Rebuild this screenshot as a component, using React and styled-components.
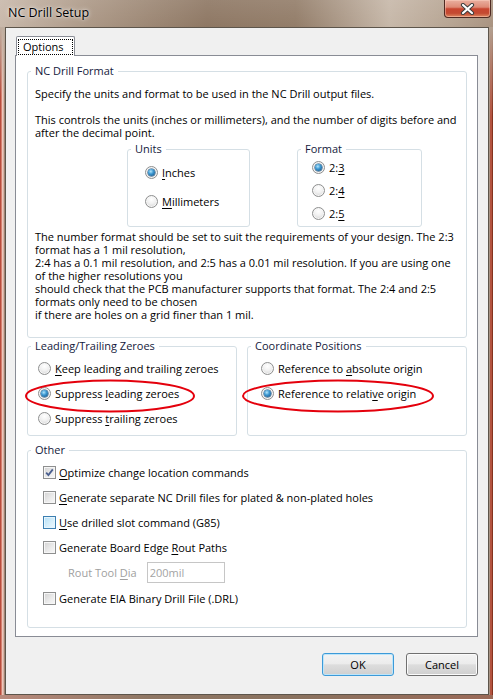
import React from 'react';
import styled, { createGlobalStyle, css } from 'styled-components';

const GlobalStyle = createGlobalStyle`
  html, body { margin: 0; padding: 0; background: #fff; }
  #root { width: 493px; height: 699px; }
  *, *::before, *::after { box-sizing: border-box; }
`;

const Window = styled.div`
  width: 493px;
  height: 699px;
  display: flex;
  flex-direction: column;
  overflow: hidden;
  font-family: "Open Sans", "Noto Sans", sans-serif;
  font-size: 11px;
  color: #000;
  background:
    linear-gradient(to bottom, rgba(255,255,255,0.10), rgba(255,255,255,0) 30px),
    linear-gradient(to right, #c8b8aa 0%, #ab9785 18%, #8d7662 42%, #927c68 60%, #c6b7a8 79%, #b6a492 91%, #a8927f 100%);
`;

const TitleBar = styled.div`
  height: 27px;
  flex: none;
  display: flex;
  align-items: flex-start;
  justify-content: space-between;
  padding: 0 2px 0 8px;
`;

const TitleText = styled.div`
  font-size: 12.5px;
  line-height: 26px;
  color: #000;
  text-shadow: 0 0 5px rgba(255,255,255,0.85), 0 0 2px rgba(255,255,255,0.6);
`;

const CloseButton = styled.div`
  width: 47px;
  height: 18px;
  border: 1px solid #4e2a22;
  border-top: none;
  border-radius: 0 0 4px 4px;
  background: linear-gradient(to bottom, #eab0a0 0%, #de8a76 42%, #c8452f 52%, #c44a32 78%, #de8a62 100%);
  box-shadow: inset 0 0 0 1px rgba(255, 215, 200, 0.45);
  display: flex;
  align-items: center;
  justify-content: center;
`;

const FrameRow = styled.div`
  flex: 1;
  display: flex;
  min-height: 0;
`;

const LeftFrame = styled.div`
  width: 5px;
  flex: none;
  background:
    linear-gradient(to bottom, #bfae9f 0px, rgba(191,174,159,0.6) 30px, rgba(191,174,159,0) 70px),
    linear-gradient(to right, #b84c3d 0 1px, #d6806f 1px 2px, #ecc6ba 2px 3px, #d7b1a3 3px 4px, #9c8474 4px 5px);
`;

const RightFrame = styled.div`
  width: 4px;
  flex: none;
  background:
    linear-gradient(to bottom, #b2a090 0px, rgba(178,160,144,0.5) 40px, rgba(178,160,144,0) 90px),
    linear-gradient(to right, #a89484 0 1px, #b4533f 1px 3px, #84321f 3px 4px);
`;

const BottomFrame = styled.div`
  height: 4px;
  flex: none;
  background: linear-gradient(to right, #b98a7c 0%, #8f7764 30%, #8a725f 60%, #9b6a58 100%);
`;

const Client = styled.div`
  flex: 1;
  min-width: 0;
  display: flex;
  flex-direction: column;
  background: #f0f0f0;
  border: 1px solid #5d554b;
  padding: 8px 10px 18px 9px;
`;

const TabStrip = styled.div`
  display: flex;
  padding-left: 1px;
`;

const Tab = styled.div`
  position: relative;
  z-index: 1;
  height: 20px;
  margin-bottom: -1px;
  padding: 2px 1px 0 1px;
  border: 1px solid #898c95;
  border-bottom: none;
  border-radius: 2px 2px 0 0;
  background: #fff;
`;

const TabFocus = styled.span`
  display: block;
  height: 16px;
  padding: 0 8px 0 4px;
  border: 1px dotted #000;
  line-height: 14px;
`;

const Panel = styled.div`
  display: flex;
  flex-direction: column;
  min-width: 0;
  background: #fff;
  border: 1px solid #898c95;
  padding: 7px 10px 8px 11px;
`;

const Group = styled.fieldset`
  margin: ${p => p.$mt || 0}px 0 0 0;
  padding: 0;
  min-width: 0;
  border: 1px solid #d5dfe5;
  border-radius: 3px;
  ${p => p.$w ? css`width: ${p.$w}px; flex: none;` : css`flex: 1;`}
`;

const Legend = styled.legend`
  margin-left: 3px;
  padding: 0 4px;
  font-size: 11px;
  line-height: 16px;
  color: #141a3c;
`;

const GroupBody = styled.div`
  display: flex;
  flex-direction: column;
  align-items: flex-start;
  gap: ${p => p.$gap || 0}px;
  padding: ${p => p.$pad};
`;

const Text = styled.div`
  margin-top: ${p => p.$mt || 0}px;
  line-height: 13px;
  white-space: nowrap;
`;

const SubRow = styled.div`
  display: flex;
  gap: 47px;
  margin-top: 2px;
  padding-left: 92px;
`;

const Row = styled.div`
  display: flex;
  gap: 10px;
`;

const OptionRow = styled.label`
  position: relative;
  display: flex;
  align-items: center;
  gap: ${p => p.$gap || 4}px;
  height: ${p => p.$h || 20}px;
  padding-left: ${p => p.$indent || 0}px;
  white-space: nowrap;
  color: ${p => p.$disabled ? '#a0a0a0' : '#000'};
`;

const RadioGlyph = styled.span`
  position: relative;
  flex: none;
  width: 13px;
  height: 13px;
  border-radius: 50%;
  border: 1px solid #8e8f8f;
  background: radial-gradient(circle at 50% 30%, #ffffff 0%, #f1f1f1 45%, #cdcdcd 100%);
  box-shadow: inset 0 0 0 1px #f6f6f6;
  ${p => p.$checked && css`
    &::after {
      content: '';
      position: absolute;
      left: 2px;
      top: 2px;
      width: 7px;
      height: 7px;
      border-radius: 50%;
      background: radial-gradient(circle at 40% 35%, #b3e6fc 0%, #3f9ad3 40%, #185b90 85%);
      box-shadow: 0 0 0 0.5px #1a4b75;
    }
  `}
`;

const CheckGlyph = styled.span`
  flex: none;
  display: flex;
  align-items: center;
  justify-content: center;
  width: 13px;
  height: 13px;
  border: 1px solid ${p => p.$hot ? '#3c7fb1' : '#8e8f8f'};
  background: ${p => p.$hot
    ? 'linear-gradient(135deg, #b4dff6 0%, #d9f0fb 60%, #ecf8fe 100%)'
    : 'linear-gradient(135deg, #d2d2d2 0%, #ececec 60%, #f8f8f8 100%)'};
  box-shadow: inset 0 0 0 1px ${p => p.$hot ? '#e6f5fd' : '#f6f6f6'};
`;

const Acc = styled.u`
  text-decoration: underline;
  text-underline-offset: 2px;
`;

const Ellipse = styled.svg`
  position: absolute;
  left: ${p => p.$x}px;
  top: ${p => p.$y}px;
  overflow: visible;
  pointer-events: none;
`;

const TextBox = styled.input`
  width: 78px;
  height: 21px;
  margin: 0;
  padding: 0 2px;
  border: 1px solid #c6c6c6;
  background: #fff;
  color: #a3a3a3;
  font-family: inherit;
  font-size: 11px;
  outline: none;
`;

const ButtonRow = styled.div`
  display: flex;
  justify-content: flex-end;
  gap: 12px;
  margin-top: 16px;
`;

const Button = styled.button`
  width: 72px;
  height: 23px;
  padding: 0;
  font-family: inherit;
  font-size: 11px;
  color: #000;
  border: 1px solid ${p => p.$default ? '#3c9ad8' : '#707070'};
  border-radius: 3px;
  background: linear-gradient(to bottom, #f3f3f3 0%, #ececec 45%, #dddddd 52%, #cfcfcf 100%);
  box-shadow: inset 0 0 0 1px ${p => p.$default ? '#bde5fa' : '#fbfbfb'};
`;

function Radio({ checked, children }) {
  return (
    <OptionRow>
      <RadioGlyph $checked={checked} />
      <span>{children}</span>
    </OptionRow>
  );
}

function Check({ checked, hot, children }) {
  return (
    <OptionRow $gap={3}>
      <CheckGlyph $hot={hot}>
        {checked && (
          <svg width="9" height="9" viewBox="0 0 9 9">
            <path d="M1.2 4.6 L3.4 7 L7.8 1.4" fill="none" stroke="#4a5f8f" strokeWidth="1.8" />
          </svg>
        )}
      </CheckGlyph>
      <span>{children}</span>
    </OptionRow>
  );
}

function RedEllipse({ x, y, w, h }) {
  return (
    <Ellipse $x={x} $y={y} width={w} height={h} viewBox={`0 0 ${w} ${h}`}>
      <ellipse cx={w / 2} cy={h / 2} rx={w / 2 - 2} ry={h / 2 - 2.5} fill="none" stroke="#e4000c" strokeWidth="2" />
    </Ellipse>
  );
}

export default function App() {
  return (
    <>
      <GlobalStyle />
      <Window>
        <TitleBar>
          <TitleText>NC Drill Setup</TitleText>
          <CloseButton aria-label="Close">
            <svg width="15" height="12" viewBox="0 0 15 12">
              <path d="M3 2 L12 10 M12 2 L3 10" stroke="#3d3d3d" strokeWidth="4.2" strokeLinecap="round" />
              <path d="M3 2 L12 10 M12 2 L3 10" stroke="#ffffff" strokeWidth="2.2" strokeLinecap="round" />
            </svg>
          </CloseButton>
        </TitleBar>
        <FrameRow>
          <LeftFrame />
          <Client>
            <TabStrip>
              <Tab><TabFocus>Options</TabFocus></Tab>
            </TabStrip>
            <Panel>
              <Group>
                <Legend>NC Drill Format</Legend>
                <GroupBody $pad="8px 8px 16px 7px">
                  <Text>
                    Specify the units and format to be used in the NC Drill output files.<br />
                    <br />
                    This controls the units (inches or millimeters), and the number of digits before and<br />
                    after the decimal point.
                  </Text>
                  <SubRow>
                    <Group $w={123}>
                      <Legend>Units</Legend>
                      <GroupBody $pad="5px 0 15px 17px" $gap={9}>
                        <Radio checked><Acc>I</Acc>nches</Radio>
                        <Radio><Acc>M</Acc>illimeters</Radio>
                      </GroupBody>
                    </Group>
                    <Group $w={125}>
                      <Legend>Format</Legend>
                      <GroupBody $pad="0 0 3px 14px" $gap={3}>
                        <Radio checked>2:<Acc>3</Acc></Radio>
                        <Radio>2:<Acc>4</Acc></Radio>
                        <Radio>2:<Acc>5</Acc></Radio>
                      </GroupBody>
                    </Group>
                  </SubRow>
                  <Text $mt={3}>
                    The number format should be set to suit the requirements of your design. The 2:3<br />
                    format has a 1 mil resolution,<br />
                    2:4 has a 0.1 mil resolution, and 2:5 has a 0.01 mil resolution. If you are using one<br />
                    of the higher resolutions you<br />
                    should check that the PCB manufacturer supports that format. The 2:4 and 2:5<br />
                    formats only need to be chosen<br />
                    if there are holes on a grid finer than 1 mil.
                  </Text>
                </GroupBody>
              </Group>

              <Row>
                <Group $w={210}>
                  <Legend>Leading/Trailing Zeroes</Legend>
                  <GroupBody $pad="4px 0 7px 10px" $gap={5}>
                    <Radio><Acc>K</Acc>eep leading and trailing zeroes</Radio>
                    <OptionRow>
                      <RadioGlyph $checked />
                      <span>Suppress <Acc>l</Acc>eading zeroes</span>
                      <RedEllipse x={-14} y={-5} w={172} h={36} />
                    </OptionRow>
                    <Radio>Suppress <Acc>t</Acc>railing zeroes</Radio>
                  </GroupBody>
                </Group>
                <Group>
                  <Legend>Coordinate Positions</Legend>
                  <GroupBody $pad="4px 0 7px 13px" $gap={5}>
                    <Radio>Reference to <Acc>a</Acc>bsolute origin</Radio>
                    <OptionRow>
                      <RadioGlyph $checked />
                      <span>Reference to relati<Acc>v</Acc>e origin</span>
                      <RedEllipse x={-20} y={-5} w={194} h={36} />
                    </OptionRow>
                  </GroupBody>
                </Group>
              </Row>

              <Group $mt={6}>
                <Legend>Other</Legend>
                <GroupBody $pad="4px 0 19px 15px" $gap={5}>
                  <Check checked><Acc>O</Acc>ptimize change location commands</Check>
                  <Check><Acc>G</Acc>enerate separate NC Drill files for plated &amp; non-plated holes</Check>
                  <Check hot><Acc>U</Acc>se drilled slot command (G85)</Check>
                  <Check>Generate Board Edge <Acc>R</Acc>out Paths</Check>
                  <OptionRow $indent={25} $gap={10} $h={21} $disabled>
                    <span>Rout Tool <Acc>D</Acc>ia</span>
                    <TextBox readOnly value="200mil" />
                  </OptionRow>
                  <Check>Generate EIA Binary Drill File (.DRL)</Check>
                </GroupBody>
              </Group>
            </Panel>
            <ButtonRow>
              <Button $default>OK</Button>
              <Button>Cancel</Button>
            </ButtonRow>
          </Client>
          <RightFrame />
        </FrameRow>
        <BottomFrame />
      </Window>
    </>
  );
}
